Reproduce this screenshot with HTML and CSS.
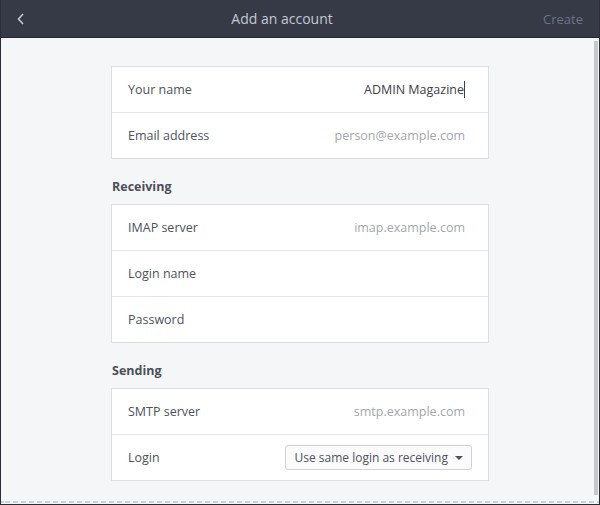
FILE: index.html
```html
<!DOCTYPE html>
<html>
<head>
    <meta charset="UTF-8">
    <title>Add an account</title>
    <link rel="stylesheet" href="styles.css">
</head>
<body>
    <div class="window">
        <div class="header">
            <span class="back">
                <svg width="10" height="14" viewBox="0 0 10 14"><path d="M7 2 L2.5 7 L7 12" fill="none" stroke="#c3c8d2" stroke-width="1.6"/></svg>
            </span>
            <span class="title">Add an account</span>
            <span class="create">Create</span>
        </div>

        <div class="content">
            <div class="card">
                <div class="row">
                    <span class="label">Your name</span>
                    <span class="value filled">ADMIN Magazine<span class="caret"></span></span>
                </div>
                <div class="row">
                    <span class="label">Email address</span>
                    <span class="value">person@example.com</span>
                </div>
            </div>

            <div class="section">Receiving</div>
            <div class="card">
                <div class="row">
                    <span class="label">IMAP server</span>
                    <span class="value">imap.example.com</span>
                </div>
                <div class="row">
                    <span class="label">Login name</span>
                </div>
                <div class="row">
                    <span class="label">Password</span>
                </div>
            </div>

            <div class="section">Sending</div>
            <div class="card">
                <div class="row">
                    <span class="label">SMTP server</span>
                    <span class="value">smtp.example.com</span>
                </div>
                <div class="row">
                    <span class="label">Login</span>
                    <button class="combo">Use same login as receiving <span class="arrow"></span></button>
                </div>
            </div>

            <div class="scrollbar"></div>
            <div class="undershoot"></div>
        </div>
    </div>
</body>
</html>
```

FILE: styles.css
```css
body {
    margin: 0;
    font-family: 'Open Sans', 'Noto Sans', sans-serif;
    font-size: 12.5px;
    background: #2b2e37;
}
.window {
    width: 600px;
    height: 505px;
    box-sizing: border-box;
    border: 1px solid #2b2e37;
    border-top: none;
    display: flex;
    flex-direction: column;
    overflow: hidden;
}
.header {
    height: 37px;
    flex-shrink: 0;
    background: #363a47;
    border-bottom: 1px solid #23262e;
    display: flex;
    align-items: center;
}
.back {
    width: 40px;
    display: flex;
    justify-content: center;
}
.title {
    flex: 1;
    text-align: center;
    color: #c3c8d2;
    font-size: 14px;
    margin-right: 20px;
}
.create {
    color: #6c7384;
    font-size: 13px;
    margin-right: 16px;
}
.content {
    flex: 1;
    background: #f5f6f7;
    padding-top: 28px;
    position: relative;
    overflow: hidden;
}
.card {
    width: 378px;
    box-sizing: border-box;
    margin-left: 110px;
    background: #ffffff;
    border: 1px solid #dcdee1;
}
.row {
    height: 46px;
    box-sizing: border-box;
    display: flex;
    align-items: center;
    justify-content: space-between;
    padding: 0 16px;
    border-top: 1px solid #e3e5e8;
}
.row:first-child {
    border-top: none;
    height: 45px;
}
.label {
    color: #4d525c;
}
.value {
    color: #a3a7ad;
    margin-right: 7px;
}
.value.filled {
    color: #3c4049;
}
.caret {
    display: inline-block;
    width: 1px;
    height: 17px;
    background: #3c4049;
    vertical-align: -4px;
}
.section {
    margin: 19px 0 9px 111px;
    font-weight: bold;
    color: #4a4f59;
}
.combo {
    font-family: inherit;
    font-size: 12px;
    color: #4d525c;
    background: #fbfbfc;
    border: 1px solid #cfd3d8;
    border-radius: 3px;
    height: 25px;
    padding: 0 8px;
    display: flex;
    align-items: center;
    gap: 7px;
}
.arrow {
    width: 0;
    height: 0;
    border-left: 4px solid transparent;
    border-right: 4px solid transparent;
    border-top: 4px solid #4d525c;
}
.scrollbar {
    position: absolute;
    right: 1px;
    top: 3px;
    width: 4px;
    height: 454px;
    background: #c5c7ca;
}
.undershoot {
    position: absolute;
    left: 0;
    right: 0;
    bottom: 1px;
    height: 2px;
    background: repeating-linear-gradient(90deg, #d2d4d7 0 5px, transparent 5px 8px);
    background-position: 4px 0;
}
```
